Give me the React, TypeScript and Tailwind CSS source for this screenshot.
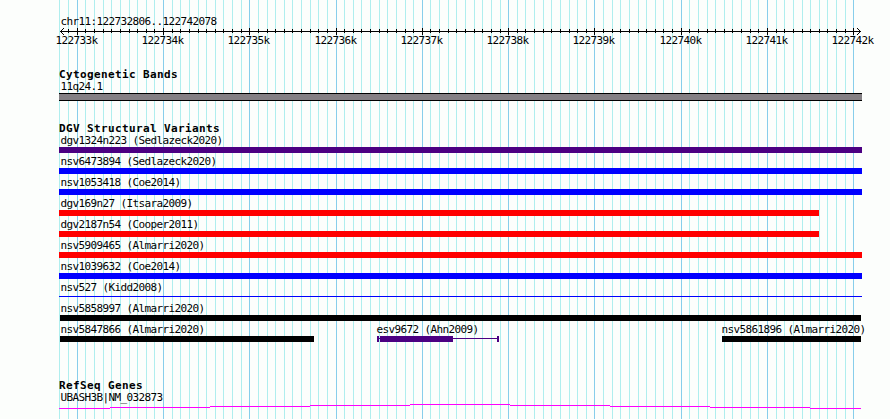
import React from 'react';

interface Segment {
  label: string;
  start: number;
  end: number;
  color: string;
  kind?: 'bar' | 'line' | 'paired';
}

const REGION_START = 122732806;
const REGION_END = 122742078;
const PAD_LEFT = 60;
const SCALE = 800 / (REGION_END - REGION_START);

const toX = (bp: number) => Math.round(PAD_LEFT + (bp - REGION_START) * SCALE);

// one tick every 100bp, a major one every 1000bp
const ticks = Array.from({ length: 93 }, (_, i) => {
  const bp = 122732800 + i * 100;
  return { bp, x: i === 0 ? 59 : toX(bp), major: bp % 1000 === 0 };
}).filter((t) => t.bp <= 122742000);

const variants: Segment[][] = [
  [{ label: 'dgv1324n223 (Sedlazeck2020)', start: 59, end: 862, color: 'bg-[#4b0082]' }],
  [{ label: 'nsv6473894 (Sedlazeck2020)', start: 59, end: 862, color: 'bg-[#0000ff]' }],
  [{ label: 'nsv1053418 (Coe2014)', start: 59, end: 862, color: 'bg-[#0000ff]' }],
  [{ label: 'dgv169n27 (Itsara2009)', start: 59, end: 819, color: 'bg-[#ff0000]' }],
  [{ label: 'dgv2187n54 (Cooper2011)', start: 59, end: 819, color: 'bg-[#ff0000]' }],
  [{ label: 'nsv5909465 (Almarri2020)', start: 59, end: 862, color: 'bg-[#ff0000]' }],
  [{ label: 'nsv1039632 (Coe2014)', start: 59, end: 862, color: 'bg-[#0000ff]' }],
  [{ label: 'nsv527 (Kidd2008)', start: 59, end: 862, color: 'bg-[#0000ff]', kind: 'line' }],
  [{ label: 'nsv5858997 (Almarri2020)', start: 60, end: 861, color: 'bg-black' }],
  [
    { label: 'nsv5847866 (Almarri2020)', start: 60, end: 314, color: 'bg-black' },
    { label: 'esv9672 (Ahn2009)', start: 377, end: 499, color: 'bg-[#4b0082]', kind: 'paired' },
    { label: 'nsv5861896 (Almarri2020)', start: 722, end: 861, color: 'bg-black' },
  ],
];

const Label: React.FC<{ children: React.ReactNode }> = ({ children }) => (
  <div className="h-[13px] text-[11px] leading-[13px] tracking-[-0.622px] whitespace-nowrap">{children}</div>
);

const Title: React.FC<{ children: React.ReactNode }> = ({ children }) => (
  <h2 className="h-[11px] pl-[59px] text-[11px] leading-[11px] font-bold tracking-[0.378px] whitespace-nowrap">{children}</h2>
);

const Grid = () => (
  <svg className="absolute inset-0" width="890" height="419" shapeRendering="crispEdges">
    {ticks.map((t) => (
      <rect key={t.bp} x={t.x} y="0" width="1" height="419" fill={t.major ? '#87ceeb' : '#afeeee'} />
    ))}
  </svg>
);

const Ruler = () => (
  <svg className="block" width="890" height="19" shapeRendering="crispEdges">
    <rect x="60" y="3" width="801" height="1" />
    {ticks.slice(1).map((t) => (
      <rect key={t.bp} x={t.x} y={t.major ? 0 : 1} width="1" height={t.major ? 7 : 4} />
    ))}
    {/* arrow heads */}
    {[1, 2, 3].map((d) => (
      <g key={d}>
        <rect x={60 + d} y={3 - d} width="1" height="1" />
        <rect x={60 + d} y={3 + d} width="1" height="1" />
        <rect x={860 - d} y={3 - d} width="1" height="1" />
        <rect x={860 - d} y={3 + d} width="1" height="1" />
      </g>
    ))}
    {ticks.filter((t) => t.major).map((t) => (
      <text key={t.bp} x={t.x - 21.5} y="16" className="text-[11px] tracking-[-0.622px]">
        {t.bp / 1000}k
      </text>
    ))}
  </svg>
);

const Glyph: React.FC<{ segment: Segment }> = ({ segment }) => {
  if (segment.kind === 'line') {
    return <div className={`mt-[2px] h-px ${segment.color}`} />;
  }
  if (segment.kind === 'paired') {
    return (
      <div className="flex h-[6px]">
        <div className="w-[2px] bg-[#4b0082]" />
        <div className="mt-[2px] h-px w-px bg-[#4b0082]" />
        <div className="w-[73px] bg-[#4b0082]" />
        <div className="mt-[2px] h-px flex-1 bg-[#4b0082]" />
        <div className="w-[2px] bg-[#4b0082]" />
      </div>
    );
  }
  return <div className={`h-[6px] ${segment.color}`} />;
};

const VariantRow: React.FC<{ segments: Segment[] }> = ({ segments }) => (
  <div className="flex h-[21px]">
    {segments.map((s, i) => {
      const gap = s.start - (i > 0 ? segments[i - 1].end : 0);
      return (
        <div key={s.label} className="shrink-0" style={{ marginLeft: gap, width: s.end - s.start }}>
          <div className={i > 0 ? '-ml-[0.6px]' : s.start === 59 ? 'pl-[1.4px]' : 'pl-[0.4px]'}>
            <Label>{s.label}</Label>
          </div>
          <Glyph segment={s} />
        </div>
      );
    })}
  </div>
);

// coding profile steps by one pixel every 100px
const GENE_PATH =
  'M59 4.5H110M110 3.5H210M210 2.5H310M310 1.5H410M410 0.5H510M510 1.5H610M610 2.5H710M710 3.5H810M810 4.5H861';

const App = () => (
  <div className="relative h-[419px] w-[890px] overflow-hidden bg-[#fcfefc] font-['DejaVu_Sans_Mono',monospace] text-black">
    <Grid />
    <main className="relative pt-[15px]">
      <div className="pl-[60.4px]">
        <Label>chr11:122732806..122742078</Label>
      </div>
      <Ruler />

      <section className="pt-[22px]">
        <Title>Cytogenetic Bands</Title>
        <div className="pl-[60.4px]">
          <Label>11q24.1</Label>
        </div>
        <div className="ml-[59px] h-2 w-[803px] border-y border-black bg-[#848084]" />
      </section>

      <section className="pt-[22px]">
        <Title>DGV Structural Variants</Title>
        {variants.map((segments) => (
          <VariantRow key={segments[0].label} segments={segments} />
        ))}
      </section>

      <section className="pt-[36px]">
        <Title>RefSeq Genes</Title>
        <div className="pl-[60.4px]">
          <Label>UBASH3B|NM_032873</Label>
        </div>
        <svg className="block" width="890" height="5" shapeRendering="crispEdges">
          <path d={GENE_PATH} fill="none" stroke="#ff00ff" />
        </svg>
      </section>
    </main>
  </div>
);

export default App;
